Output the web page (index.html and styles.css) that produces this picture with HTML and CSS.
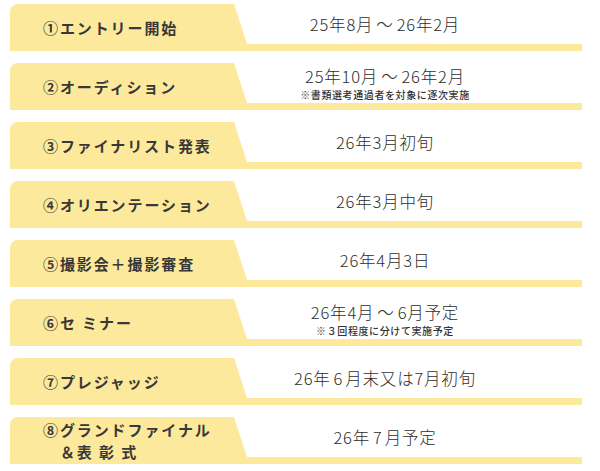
FILE: index.html
```html
<!DOCTYPE html>
<html lang="ja">
<head>
<meta charset="utf-8">
<title>スケジュール</title>
<link rel="stylesheet" href="styles.css">
</head>
<body>
<div class="schedule">
  <div class="row">
    <div class="label">①エントリー開始</div>
    <div class="date"><span class="main">25年8月<span class="tilde">～</span>26年2月</span></div>
  </div>
  <div class="row">
    <div class="label">②オーディション</div>
    <div class="date"><span class="main">25年10月<span class="tilde">～</span>26年2月</span><span class="note">※書類選考通過者を対象に逐次実施</span></div>
  </div>
  <div class="row">
    <div class="label">③ファイナリスト発表</div>
    <div class="date"><span class="main">26年3月初旬</span></div>
  </div>
  <div class="row">
    <div class="label">④オリエンテーション</div>
    <div class="date"><span class="main">26年3月中旬</span></div>
  </div>
  <div class="row">
    <div class="label">⑤撮影会＋撮影審査</div>
    <div class="date"><span class="main">26年4月3日</span></div>
  </div>
  <div class="row">
    <div class="label">⑥セ ミナー</div>
    <div class="date"><span class="main">26年4月<span class="tilde">～</span>6月予定</span><span class="note">※３回程度に分けて実施予定</span></div>
  </div>
  <div class="row">
    <div class="label">⑦プレジャッジ</div>
    <div class="date"><span class="main">26年<span class="pad">6</span>月末又は7月初旬</span></div>
  </div>
  <div class="row">
    <div class="label two">⑧グランドファイナル<br>　＆表 彰 式</div>
    <div class="date"><span class="main">26年<span class="pad">7</span>月予定</span></div>
  </div>
</div>
</body>
</html>
```

FILE: styles.css
```css
html, body {
  margin: 0;
  padding: 0;
  background: #ffffff;
}

body {
  font-family: "Noto Sans CJK JP", "Noto Sans", sans-serif;
  color: #333333;
}

.schedule {
  display: flex;
  flex-direction: column;
  gap: 12px;
  padding: 4px 18px 0 10px;
  width: 572px;
}

.row {
  display: flex;
  height: 47px;
  background: linear-gradient(#fde99b, #fde99b) left bottom / 100% 7px no-repeat;
}

.label {
  flex: 0 0 237px;
  box-sizing: border-box;
  height: 47px;
  display: flex;
  align-items: center;
  padding-left: 33px;
  background: #fde99b;
  border-radius: 8px 0 0 8px;
  clip-path: polygon(0 0, 224px 0, 237px 40px, 237px 47px, 0 47px);
  font-weight: 700;
  font-size: 15px;
  letter-spacing: 1.9px;
  color: #383838;
  white-space: nowrap;
}

.label.two {
  line-height: 22px;
}

.date {
  flex: 1;
  display: flex;
  flex-direction: column;
  align-items: center;
  justify-content: center;
  padding: 0 59px 7px 0;
}

.main {
  font-size: 16.5px;
  line-height: 22px;
  letter-spacing: 0.8px;
  font-weight: 300;
  color: #2e2e2e;
  white-space: nowrap;
}

.tilde {
  margin: 0 3px;
}

.pad {
  margin: 0 2px 0 3px;
}

.note {
  font-size: 10px;
  line-height: 14px;
  margin-top: 1px;
  letter-spacing: 0.6px;
  font-weight: 500;
  color: #333333;
  white-space: nowrap;
}
```
